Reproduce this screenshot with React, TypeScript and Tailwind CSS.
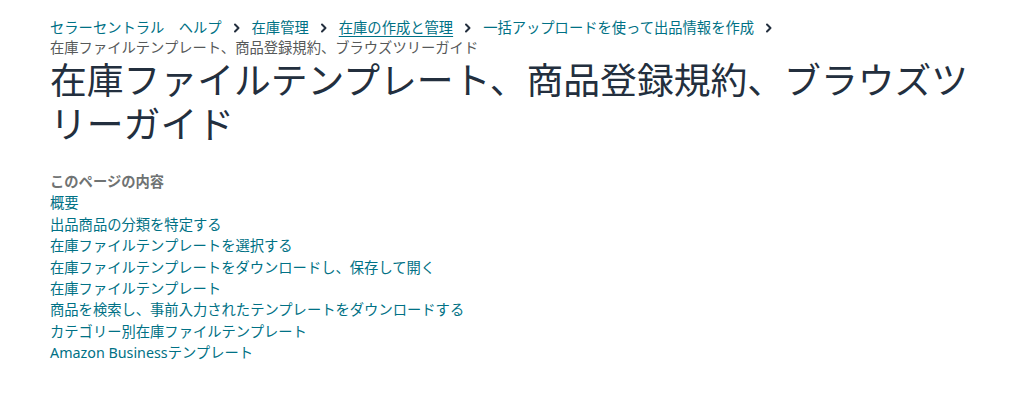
import React from "react";

const Chevron = () => (
  <svg width="8" height="10" viewBox="0 0 8 10" className="mx-[11px] inline-block">
    <path d="M2 1.5 L5.5 5 L2 8.5" fill="none" stroke="#232f3e" strokeWidth="2" strokeLinecap="round" strokeLinejoin="round" />
  </svg>
);

const crumbs = [
  { label: "セラーセントラル　ヘルプ", underline: false },
  { label: "在庫管理", underline: false },
  { label: "在庫の作成と管理", underline: true },
  { label: "一括アップロードを使って出品情報を作成", underline: false },
];

const toc = [
  "概要",
  "出品商品の分類を特定する",
  "在庫ファイルテンプレートを選択する",
  "在庫ファイルテンプレートをダウンロードし、保存して開く",
  "在庫ファイルテンプレート",
  "商品を検索し、事前入力されたテンプレートをダウンロードする",
  "カテゴリー別在庫ファイルテンプレート",
  "Amazon Businessテンプレート",
];

const App = () => {
  return (
    <div
      className="min-h-screen w-full bg-white pl-[50px] pr-[28px] pt-[18px]"
      style={{ fontFamily: '"Noto Sans", "Noto Sans CJK JP", sans-serif' }}
    >
      <div className="text-[14.3px] leading-[20px]">
        <div className="flex flex-wrap items-center">
          {crumbs.map((c) => (
            <span key={c.label} className="flex items-center">
              <a className={"text-[#007185] " + (c.underline ? "underline underline-offset-[3px]" : "")}>{c.label}</a>
              <Chevron />
            </span>
          ))}
        </div>
        <div className="text-[#565959]">在庫ファイルテンプレート、商品登録規約、ブラウズツリーガイド</div>
      </div>

      <h1 className="text-[36.8px] leading-[44px] font-normal text-[#232f3e]">
        在庫ファイルテンプレート、商品登録規約、ブラウズツリーガイド
      </h1>

      <div className="mt-[25px] text-[14.3px] leading-[21.4px]">
        <div className="font-bold text-[#6f7373]">このページの内容</div>
        <ul>
          {toc.map((t) => (
            <li key={t}>
              <a className="text-[#007185]">{t}</a>
            </li>
          ))}
        </ul>
      </div>
    </div>
  );
};

export default App;
